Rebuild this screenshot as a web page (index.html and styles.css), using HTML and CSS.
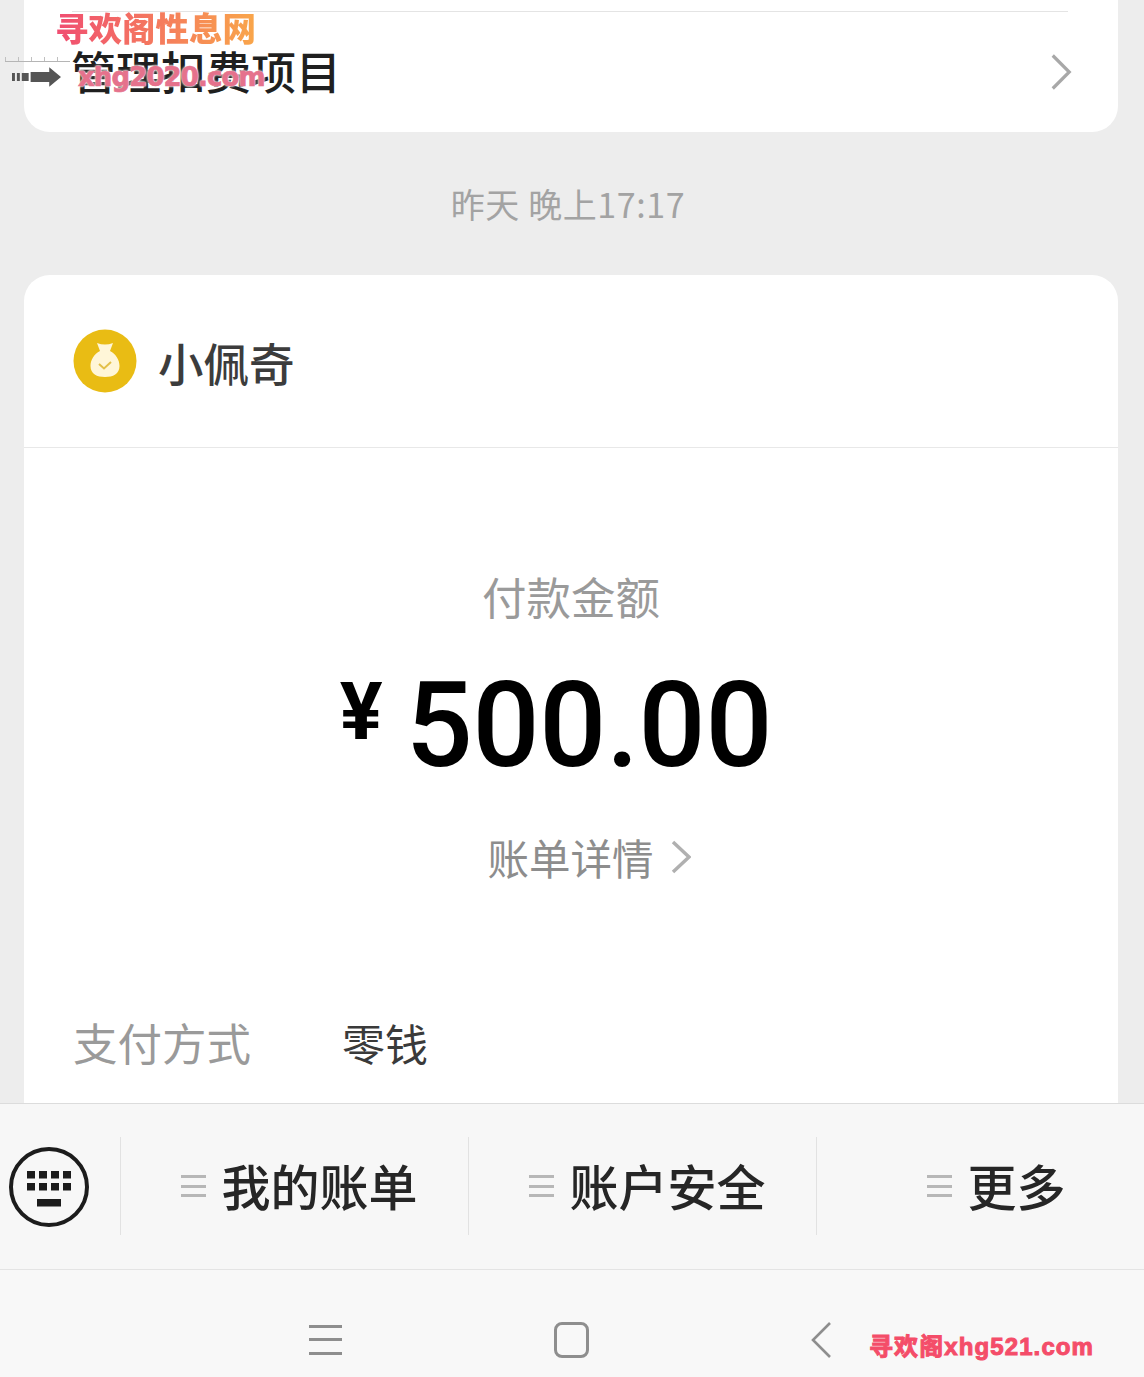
FILE: index.html
```html
<!DOCTYPE html>
<html lang="zh-CN">
<head>
<meta charset="utf-8">
<title>小佩奇</title>
<link rel="stylesheet" href="styles.css">
</head>
<body>
<div class="screen">
  <main class="chat">
    <section class="top-card">
      <div class="top-rule"></div>
      <div class="top-row">
        <span class="top-title">管理扣费项目</span>
        <svg class="top-chevron" viewBox="0 0 24 40"><path d="M3 2 L21 20 L3 38" /></svg>
      </div>
    </section>
    <div class="time">昨天 晚上17:17</div>
    <section class="pay-card">
      <header class="pay-head">
        <svg class="pay-logo" viewBox="0 0 64 64">
          <circle cx="32" cy="32" r="31.5" fill="#e9bc14"/>
          <path d="M24 14 Q32 17 40 14 L37 22 C43 25 46.5 31 46.5 37 C46.5 45 40 48 32 48 C24 48 17.5 45 17.5 37 C17.5 31 21 25 27 22 Z" fill="#fff6d8"/>
          <path d="M26 35 L31 39.5 L38 33" fill="none" stroke="#e3c04a" stroke-width="2"/>
        </svg>
        <span class="pay-name">小佩奇</span>
      </header>
      <div class="pay-body">
        <div class="amount-label">付款金额</div>
        <div class="amount"><span class="yen">¥</span><span class="digits">500.00</span></div>
        <div class="detail">
          <span>账单详情</span>
          <svg class="detail-chevron" viewBox="0 0 20 34"><path d="M2 2 L18 17 L2 32" /></svg>
        </div>
      </div>
      <div class="method">
        <span class="method-key">支付方式</span>
        <span class="method-value">零钱</span>
      </div>
    </section>
  </main>
  <nav class="menu">
    <div class="kbd-cell">
      <svg class="kbd" viewBox="0 0 80 80">
        <circle cx="40" cy="40" r="38" fill="none" stroke="#1c1c1c" stroke-width="4"/>
        <g fill="#1c1c1c">
          <rect x="18" y="24" width="8" height="7.5"/><rect x="30" y="24" width="8" height="7.5"/><rect x="42" y="24" width="8" height="7.5"/><rect x="54" y="24" width="8" height="7.5"/>
          <rect x="18" y="36" width="8" height="7.5"/><rect x="30" y="36" width="8" height="7.5"/><rect x="42" y="36" width="8" height="7.5"/><rect x="54" y="36" width="8" height="7.5"/>
          <rect x="28" y="52" width="24" height="7.5"/>
        </g>
      </svg>
    </div>
    <div class="menu-item item-bill">
      <span class="lines"><i></i><i></i><i></i></span><span class="menu-text">我的账单</span>
    </div>
    <div class="menu-item item-safe">
      <span class="lines"><i></i><i></i><i></i></span><span class="menu-text">账户安全</span>
    </div>
    <div class="menu-item item-more">
      <span class="lines"><i></i><i></i><i></i></span><span class="menu-text">更多</span>
    </div>
  </nav>
  <footer class="sysbar">
    <span class="sys-menu"><i></i><i></i><i></i></span>
    <span class="sys-home"></span>
    <svg class="sys-back" viewBox="0 0 22 38"><path d="M20 2 L3 19 L20 36" /></svg>
  </footer>
  <div class="mark-site">寻欢阁性息网</div>
  <div class="mark-ruler"></div>
  <svg class="mark-arrow" viewBox="0 0 50 20">
    <path d="M0 6h3v8h-3zM5 6h3v8h-3zM10 6h7v8h-7zM19 5h19v-5l12 10l-12 10v-5h-19z" fill="#555"/>
  </svg>
  <div class="mark-domain">xhg2020.com</div>
  <div class="mark-foot">寻欢阁xhg521.com</div>
</div>
</body>
</html>
```
FILE: styles.css
```css
* { box-sizing: border-box; }
html, body { margin: 0; padding: 0; }
body { font-family: "Noto Sans CJK SC", "Noto Sans", sans-serif; background: #ededed; }

.screen {
  position: relative;
  width: 1144px;
  height: 1377px;
  overflow: hidden;
  display: flex;
  flex-direction: column;
}

.chat {
  height: 1103px;
  flex: none;
  overflow: hidden;
  padding: 0 26px 0 24px;
  display: flex;
  flex-direction: column;
  background: #ededed;
}

.top-card {
  height: 132px;
  flex: none;
  background: #fff;
  border-radius: 0 0 26px 26px;
  padding-top: 11px;
}
.top-rule { height: 1px; margin: 0 50px 0 48px; background: #e4e4e4; }
.top-row {
  display: flex;
  align-items: center;
  justify-content: space-between;
  padding: 0 46px 0 47px;
  height: 120px;
}
.top-title { font-size: 45px; line-height: 60px; color: #1f1f1f; margin-top: -2px; font-weight: 500; }
.top-chevron { width: 22px; height: 40px; fill: none; stroke: #a8a8a8; stroke-width: 3.5; }

.time {
  height: 143px;
  flex: none;
  display: flex;
  align-items: center;
  justify-content: center;
  font-size: 34px;
  letter-spacing: 0.6px;
  color: #a3a3a3;
  margin-left: -6px;
}

.pay-card {
  flex: 1;
  background: #fff;
  border-radius: 26px 26px 0 0;
}
.pay-head {
  height: 173px;
  border-bottom: 1px solid #e8e8e8;
  padding: 0 0 0 49px;
  display: flex;
  align-items: center;
  gap: 21px;
}
.pay-logo { width: 64px; height: 64px; flex: none; }
.pay-name { font-size: 45.5px; line-height: 60px; color: #3c3c3c; font-weight: 500; margin-top: 1px; }

.pay-body {
  display: flex;
  flex-direction: column;
  align-items: center;
  padding-top: 118px;
}
.amount-label { font-size: 44.5px; line-height: 60px; color: #9a9a9a; }
.amount {
  display: flex;
  align-items: flex-start;
  height: 140px;
  margin-top: 28px;
  margin-left: -30px;
  color: #000;
}
.yen { font-family: "Roboto", sans-serif; font-weight: 700; font-size: 80px; line-height: 100px; width: 66px; margin-top: 8px; }
.digits { font-family: "Roboto", sans-serif; font-weight: 500; font-size: 118px; line-height: 140px; letter-spacing: -0.3px; margin-top: 2px; }
.detail {
  display: flex;
  align-items: center;
  gap: 17px;
  margin-top: 33px;
  color: #8d8d8d;
  font-size: 41.5px;
  line-height: 60px;
  margin-left: 36px;
}
.detail-chevron { width: 20px; height: 34px; fill: none; stroke: #b0b0b0; stroke-width: 3.5; }

.method {
  display: flex;
  padding: 0 0 0 49px;
  margin-top: 125px;
  line-height: 60px;
}
.method-key { width: 269px; font-size: 44.5px; color: #9a9a9a; }
.method-value { font-size: 43px; color: #3a3a3a; }

.menu {
  height: 167px;
  flex: none;
  display: flex;
  align-items: center;
  background: #f7f7f7;
  border-top: 1px solid #dcdcdc;
  border-bottom: 1px solid #e4e4e4;
}
.kbd-cell { width: 120px; height: 100%; padding-left: 9px; display: flex; align-items: center; flex: none; }
.kbd { width: 80px; height: 80px; }
.menu-item {
  height: 98px;
  margin-top: -1px;
  border-left: 1px solid #e2e2e2;
  display: flex;
  align-items: center;
  justify-content: center;
  gap: 15px;
  flex: none;
  padding-left: 10px;
}
.item-bill { width: 348px; }
.item-safe { width: 348px; }
.item-more { width: 328px; padding-left: 32px; }
.lines { display: flex; flex-direction: column; gap: 6.5px; width: 25px; flex: none; }
.lines i { display: block; height: 3px; background: #b7b7b7; }
.menu-text { font-size: 49px; line-height: 64px; color: #262626; margin-top: -3px; font-weight: 500; }

.sysbar {
  flex: 1;
  background: #f8f8f8;
  display: flex;
  align-items: center;
  padding: 32px 0 0 309px;
}
.sys-menu { display: flex; flex-direction: column; gap: 10.5px; width: 33px; flex: none; }
.sys-menu i { display: block; height: 3px; background: #8e8e8e; }
.sys-home { width: 35px; height: 36px; border: 3px solid #8e8e8e; border-radius: 8px; margin-left: 212px; flex: none; }
.sys-back { width: 22px; height: 38px; margin-left: 221px; fill: none; stroke: #8e8e8e; stroke-width: 2.6; flex: none; }

/* Watermarks laid over the screenshot */
.mark-site {
  position: absolute;
  left: 55px;
  top: 5px;
  font-size: 33.5px;
  line-height: 44px;
  font-weight: 900;
  background: linear-gradient(90deg, #f04d72, #f9a64a);
  -webkit-background-clip: text;
  background-clip: text;
  color: transparent;
}
.mark-ruler {
  position: absolute;
  left: 5px;
  top: 57px;
  width: 65px;
  height: 5px;
  border-bottom: 1px solid #b5b5b5;
  background: repeating-linear-gradient(90deg, #c0c0c0 0 1px, transparent 1px 13px);
}
.mark-arrow { position: absolute; left: 12px; top: 67px; width: 49px; height: 20px; }
.mark-domain {
  position: absolute;
  left: 78px;
  top: 59px;
  font-family: "DejaVu Sans", sans-serif;
  font-weight: 700;
  font-size: 26px;
  line-height: 36px;
  letter-spacing: -0.9px;
  color: #e5728c;
  -webkit-text-stroke: 0.7px #e5728c;
  text-shadow: 0 0 2px #fff, 0 0 2px #fff, 0 0 3px #fff;
}
.mark-foot {
  position: absolute;
  left: 869px;
  top: 1330px;
  font-family: "Liberation Sans", "Noto Sans CJK SC", sans-serif;
  font-weight: 700;
  font-size: 24px;
  line-height: 34px;
  color: #f44d69;
  letter-spacing: 1.1px;
  -webkit-text-stroke: 1px #f44d69;
}
```
